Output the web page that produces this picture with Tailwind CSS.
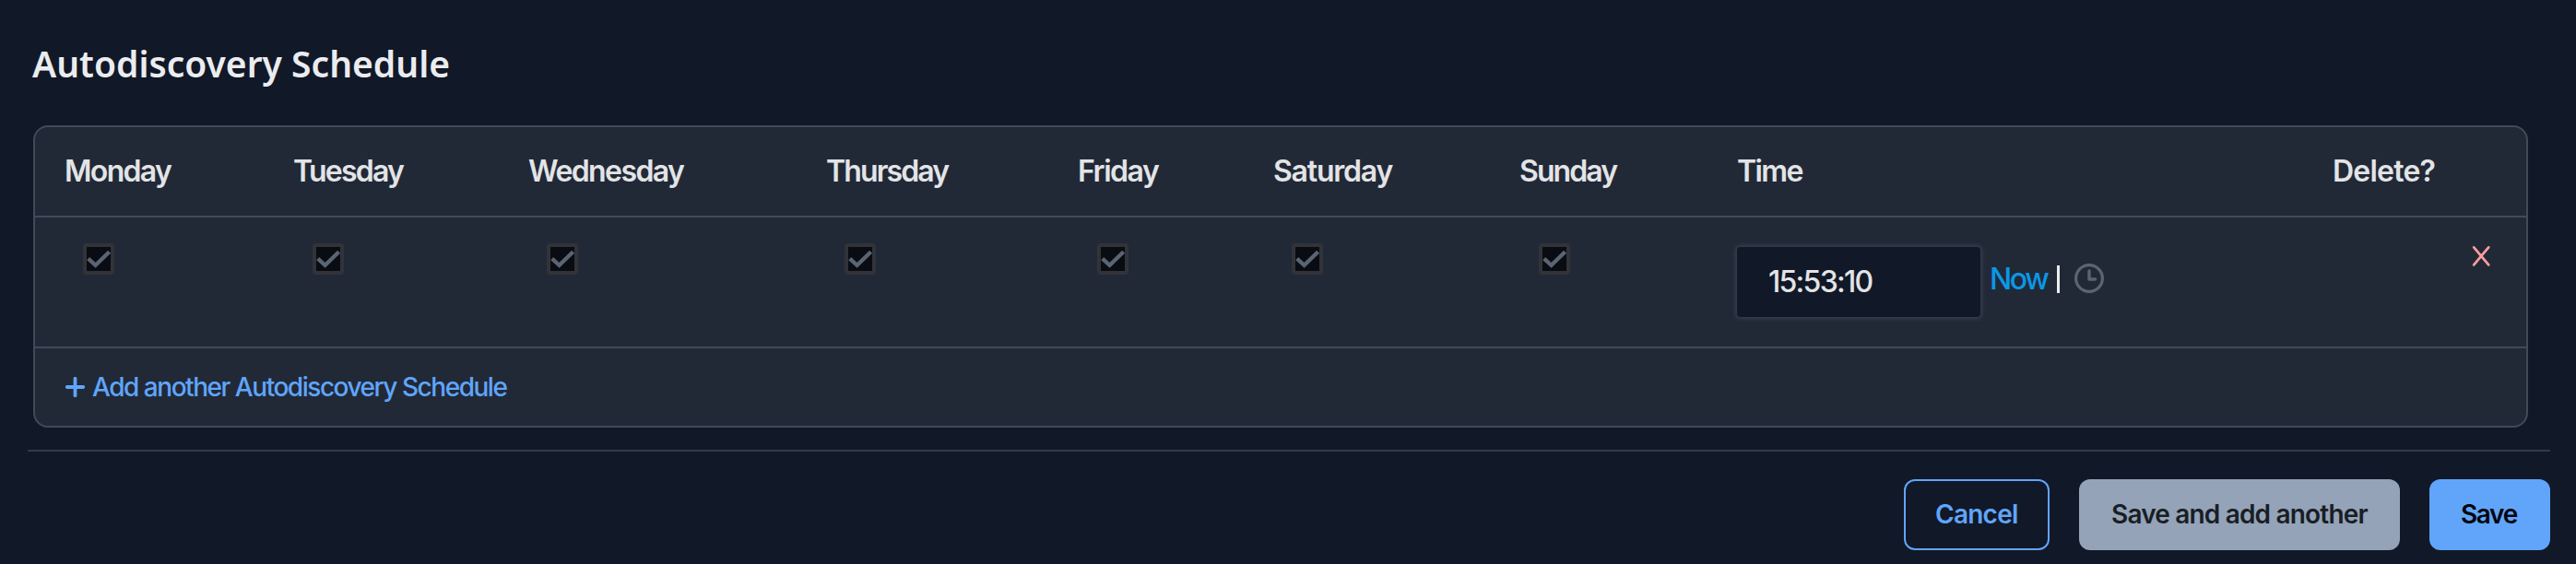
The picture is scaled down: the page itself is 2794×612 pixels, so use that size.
<!DOCTYPE html>
<html lang="en">
<head>
<meta charset="utf-8">
<title>Autodiscovery Schedule</title>
<script src="https://cdn.jsdelivr.net/npm/@tailwindcss/browser@4"></script>
</head>
<body class="bg-[#111827] h-[612px] overflow-hidden font-['Inter',sans-serif] text-[#e3e4e6]">
<svg class="hidden">
  <symbol id="check" viewBox="0 0 34 34"><path d="M5.7 16.7 13.6 23.9 28.6 9.2" fill="none" stroke="#5a6573" stroke-width="4.3"/></symbol>
</svg>
<main class="pl-[30px] pr-7 flex flex-col">
  <h1 class="ml-[5px] mt-11 h-[50px] leading-[50px] text-[39px] font-semibold font-['Noto_Sans',sans-serif] text-[#ebecef] whitespace-nowrap">Autodiscovery Schedule</h1>

  <section class="ml-1.5 mr-6 mt-[42px] h-[328px] border-2 border-[#414a59] rounded-2xl bg-[#212937] overflow-hidden flex flex-col">
    <div class="h-[98px] pl-8 border-b-2 border-[#414a59] grid grid-cols-[248px_254px_324px_274px_211px_267px_235px_647px_1fr] items-center text-[32px] leading-[96px] font-semibold whitespace-nowrap">
      <div class="tracking-[-1.68px]">Monday</div>
      <div class="tracking-[-1.78px]">Tuesday</div>
      <div class="pl-px tracking-[-1.6px]">Wednesday</div>
      <div class="tracking-[-1.88px]">Thursday</div>
      <div class="-ml-px tracking-[-1.46px]">Friday</div>
      <div class="tracking-[-1.2px]">Saturday</div>
      <div class="tracking-[-1.9px]">Sunday</div>
      <div class="pl-px tracking-[-1.6px]">Time</div>
      <div class="tracking-[-0.78px]">Delete?</div>
    </div>

    <div class="h-[142px] pl-8 border-b-2 border-[#414a59] grid grid-cols-[248px_254px_324px_274px_211px_267px_235px_647px_1fr] items-start">
      <div class="pt-7 pl-5"><div class="size-[34px] rounded border-4 border-[#323338] bg-[#090c13]"><svg class="size-[34px] -m-1 block"><use href="#check"/></svg></div></div>
      <div class="pt-7 pl-[21px]"><div class="size-[34px] rounded border-4 border-[#323338] bg-[#090c13]"><svg class="size-[34px] -m-1 block"><use href="#check"/></svg></div></div>
      <div class="pt-7 pl-[21px]"><div class="size-[34px] rounded border-4 border-[#323338] bg-[#090c13]"><svg class="size-[34px] -m-1 block"><use href="#check"/></svg></div></div>
      <div class="pt-7 pl-5"><div class="size-[34px] rounded border-4 border-[#323338] bg-[#090c13]"><svg class="size-[34px] -m-1 block"><use href="#check"/></svg></div></div>
      <div class="pt-7 pl-5"><div class="size-[34px] rounded border-4 border-[#323338] bg-[#090c13]"><svg class="size-[34px] -m-1 block"><use href="#check"/></svg></div></div>
      <div class="pt-7 pl-5"><div class="size-[34px] rounded border-4 border-[#323338] bg-[#090c13]"><svg class="size-[34px] -m-1 block"><use href="#check"/></svg></div></div>
      <div class="pt-7 pl-[21px]"><div class="size-[34px] rounded border-4 border-[#323338] bg-[#090c13]"><svg class="size-[34px] -m-1 block"><use href="#check"/></svg></div></div>
      <div class="flex items-start pt-8 pl-px">
        <div class="w-[264px] h-[76px] rounded bg-[#111827] shadow-[0_0_4px_2px_#3a404b] pl-[34px] text-[32px] font-medium leading-[76px] tracking-[-1.73px]">15:53:10</div>
        <div class="ml-[10px] mt-[15px] flex items-center text-[32px] leading-10">
          <span class="w-[73px] font-medium tracking-[-2.4px] text-[#0b97e4]">Now</span>
          <span class="w-[3px] h-[30px] bg-[#ececee]"></span>
          <svg class="ml-4 -mt-0.5 size-8" viewBox="0 0 32 32" fill="none" stroke="#5a6573"><circle cx="16" cy="16" r="14.4" stroke-width="3.2"/><path d="M16 8v9h6.5" stroke-width="3.4" stroke-linecap="round" stroke-linejoin="round"/></svg>
        </div>
      </div>
      <svg class="ml-[151px] mt-[30px] w-5 h-6" viewBox="0 0 20 24" fill="none" stroke="#ff9d9b" stroke-width="2.7" stroke-linecap="round"><path d="M2.2 2.4l16 19M18.2 2.4l-16 19"/></svg>
    </div>

    <div class="flex-1 flex items-center pl-[33px] text-[#60a5fa]">
      <svg class="w-[21px] h-[22px]" viewBox="0 0 21 22" fill="none" stroke="currentColor" stroke-width="3.8" stroke-linecap="round"><path d="M10.5 1.8v18.4M1.8 11h17.4"/></svg>
      <span class="ml-2 text-[28px] font-medium leading-[84px] tracking-[-1.47px] whitespace-nowrap">Add another Autodiscovery Schedule</span>
    </div>
  </section>

  <footer class="mt-6 border-t-2 border-[#323948] pt-[30px] flex justify-end gap-8 text-[28px] font-semibold leading-[77px] whitespace-nowrap">
    <button class="w-[158px] h-[77px] rounded-xl border-2 border-[#60a5fa] text-[#60a5fa] pl-8 text-left leading-[73px] tracking-[-0.74px]">Cancel</button>
    <button class="w-[348px] h-[77px] rounded-xl bg-[#94a3b8] text-[#191e25] pl-[35px] text-left tracking-[-0.82px]">Save and add another</button>
    <button class="w-[131px] h-[77px] rounded-xl bg-[#60a5fa] text-[#03060d] pl-[34px] text-left tracking-[-1.35px]">Save</button>
  </footer>
</main>
</body>
</html>
